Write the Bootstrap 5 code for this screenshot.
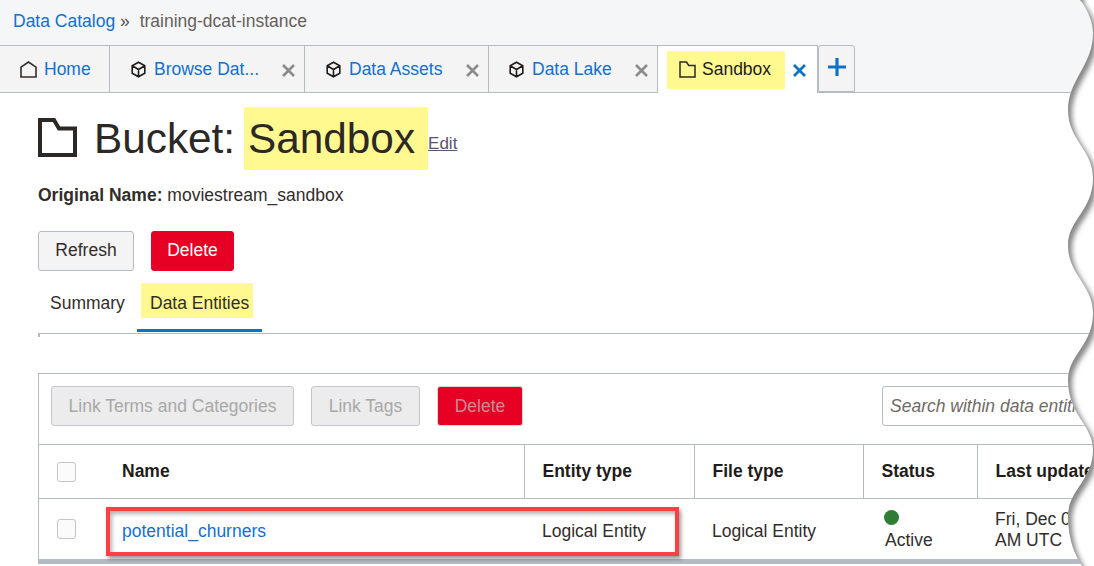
<!DOCTYPE html>
<html lang="en">
<head>
  <meta charset="UTF-8">
  <title>Bucket: Sandbox</title>
  <link href="https://cdn.jsdelivr.net/npm/bootstrap@5.3.0/dist/css/bootstrap.min.css" rel="stylesheet">
  <style>
    body {
      background: #fff;
      color: #312d2a;
      font-family: "Liberation Sans", Arial, sans-serif;
      font-size: 17.5px;
      line-height: 21px;
    }
    a { color: #1270d0; text-decoration: none; }
    .page-wrap { height: 566px; overflow: hidden; position: relative; }
    .hl { background: #fff98f; }

    .crumb-bar { height: 45px; background: #f5f6f8; padding: 11px 13px 0; }
    .crumb-sep { color: #555; margin: 0 3px 0 0; }
    .crumb-now { color: #665f5b; margin-left: 2px; }

    .tab-strip { height: 48px; background: #f5f6f8; border-bottom: 1px solid #b6bac3; align-items: stretch; flex-wrap: nowrap; }
    .tab-cell {
      height: 47px; background: #f4f4f5; border-top: 1px solid #b6bac3; border-right: 1px solid #b6bac3;
      display: flex; align-items: center; position: relative;
    }
    .tab-home { width: 110px; padding-left: 20px; }
    .tab-browse { width: 195px; padding-left: 20px; }
    .tab-assets { width: 184px; padding-left: 20px; }
    .tab-lake { width: 169px; padding-left: 19px; }
    .tab-active { width: 160px; height: 48px; background: #fff; padding-left: 9px; }
    .tab-add {
      width: 37px; height: 47px; background: #f4f4f5; padding-bottom: 3px;
      border: 1px solid #b6bac3; border-radius: 3px 3px 0 0;
      display: flex; align-items: center; justify-content: center;
    }
    .tab-cell .nav-link { color: #1270d0; padding: 1px 0 0; display: flex; align-items: center; gap: 7px; white-space: nowrap; }
    .tab-x { position: absolute; right: 9px; top: 18px; }
    .tab-active .tab-x { right: 11px; }
    .tab-hl { display: flex; align-items: center; gap: 6px; height: 38px; width: 118px; padding-left: 12px; color: #1b1b1b; }

    .main-area { padding: 14px 0 0 38px; }
    .title-line { display: flex; align-items: flex-end; height: 63px; }
    .title-icon { margin-bottom: 13px; margin-right: 17px; }
    .title-text { font-size: 42.3px; line-height: 63px; font-weight: 400; color: #2b2826; margin: 0; }
    .title-name { display: inline-block; width: 184px; padding-left: 4px; margin-left: 9px; }
    .edit-link { color: #5a5370; text-decoration: underline; margin-bottom: 16px; font-size: 17px; }
    .orig-line { margin-top: 15px; height: 21px; }

    .top-btns { margin-top: 25px; gap: 17px; }
    .ui-btn {
      height: 40px; font-size: 17.5px; line-height: 21px; padding: 0 0 2px; border-radius: 3px;
      background: #f4f4f5; border: 1px solid #b6bac3; color: #312d2a;
    }
    .ui-btn:disabled { background: #ececed; border-color: #c3c5cb; color: #a8a8a8; opacity: 1; padding: 0; }
    .ui-btn.btn-del { background: #e60023; border-color: #e60023; color: #fff; }
    .ui-btn.btn-del:disabled { background: #e60023; border-color: #d9d9d9; color: #c98b97; }
    .w-refresh { width: 96px; }
    .w-del { width: 83px; }
    .w-terms { width: 243px; }
    .w-tags { width: 109px; }
    .w-del2 { width: 86px; }

    .sub-tabs { height: 51px; margin-top: 12px; border-bottom: 1px solid #b6bac3; position: relative; flex-wrap: nowrap; }
    .sub-tabs::after { content: ""; position: absolute; left: 0; bottom: -4px; width: 2px; height: 3px; background: #b6bac3; }
    .sub-summary { padding: 0 12px; height: 36px; line-height: 41px; color: #312d2a; width: 99px; flex: none; }
    .sub-active { width: 125px; height: 49px; border-bottom: 3px solid #0572ce; padding: 0 9px 0 4px; }
    .sub-active span { display: block; height: 35px; line-height: 41px; padding-left: 9px; color: #312d2a; }

    .grid-box { margin-top: 39px; width: 1200px; border: 1px solid #b6bac3; border-bottom: 0; }
    .grid-tools { height: 70px; padding: 12px 12px 0; gap: 17px; }
    .grid-search {
      margin-left: 342px; width: 300px; height: 40px; border: 1px solid #b6bac3; border-radius: 3px;
      padding: 0 7px; font-size: 17.5px; font-family: inherit; font-style: italic;
    }
    .grid-search::placeholder { color: #6f6a67; opacity: 1; }

    .ent-table { table-layout: fixed; width: 1200px; margin: 0; border-top: 1px solid #b6bac3; color: #312d2a; }
    .ent-table th, .ent-table td { border: 0; padding: 0 18px; vertical-align: middle; background: transparent; color: #312d2a; }
    .ent-table thead th { height: 54px; font-weight: 700; border-left: 1px solid #b6bac3; border-bottom: 1px solid #b6bac3; color: #1f1c1a; }
    .ent-table thead th.no-line { border-left: 0; }
    .ent-table tbody td { height: 63px; padding-top: 2px; border-bottom: 5px solid #b6bac3; }
    .ent-table tbody td.cell-low { padding-top: 4px; }
    .ent-table .cell-name { padding-left: 16px; }
    .tick { display: block; width: 19px; height: 20px; margin-left: 18px; background: #fbfbfb; border: 1px solid #c3c5cb; border-radius: 3px; }
    .dot { display: block; width: 15px; height: 15px; border-radius: 50%; background: #2e7d32; margin-bottom: 5px; margin-left: 3px; }
    .status-txt { padding-left: 4px; display: block; }

    .red-mark {
      position: absolute; left: 106px; top: 507px; width: 573px; height: 49px;
      border: 4px solid #f94144; box-shadow: 2px 3px 4px rgba(0,0,0,.4), inset 2px 3px 4px rgba(0,0,0,.3);
    }
    .torn { position: absolute; left: 0; top: 0; width: 1094px; height: 566px; pointer-events: none; }
  </style>
</head>
<body>
<div class="page-wrap">

  <div class="crumb-bar">
    <a href="#">Data Catalog</a> <span class="crumb-sep">»</span> <span class="crumb-now">training-dcat-instance</span>
  </div>

  <ul class="nav tab-strip">
    <li class="tab-cell tab-home">
      <a class="nav-link" href="#">
        <svg width="17" height="17" viewBox="0 0 17 17" fill="none" stroke="#312d2a" stroke-width="1.6"><path d="M1 16V6.2L8.5 1 16 6.2V16z"/></svg>
        Home
      </a>
    </li>
    <li class="tab-cell tab-browse">
      <a class="nav-link" href="#">
        <svg width="17" height="17" viewBox="0 0 17 17" fill="none" stroke="#1f1c1a" stroke-width="1.6"><path d="M8.5 1.2l6.3 3.6v7.4l-6.3 3.6-6.3-3.6V4.8zM2.2 4.8l6.3 3.7 6.3-3.7M8.5 8.5v7.3"/></svg>
        Browse Dat...
      </a>
      <svg class="tab-x" width="13" height="13" viewBox="0 0 13 13" stroke="#8c8c8c" stroke-width="2.6"><path d="M1 1l11 11M12 1L1 12"/></svg>
    </li>
    <li class="tab-cell tab-assets">
      <a class="nav-link" href="#">
        <svg width="17" height="17" viewBox="0 0 17 17" fill="none" stroke="#1f1c1a" stroke-width="1.6"><path d="M8.5 1.2l6.3 3.6v7.4l-6.3 3.6-6.3-3.6V4.8zM2.2 4.8l6.3 3.7 6.3-3.7M8.5 8.5v7.3"/></svg>
        Data Assets
      </a>
      <svg class="tab-x" width="13" height="13" viewBox="0 0 13 13" stroke="#8c8c8c" stroke-width="2.6"><path d="M1 1l11 11M12 1L1 12"/></svg>
    </li>
    <li class="tab-cell tab-lake">
      <a class="nav-link" href="#">
        <svg width="17" height="17" viewBox="0 0 17 17" fill="none" stroke="#1f1c1a" stroke-width="1.6"><path d="M8.5 1.2l6.3 3.6v7.4l-6.3 3.6-6.3-3.6V4.8zM2.2 4.8l6.3 3.7 6.3-3.7M8.5 8.5v7.3"/></svg>
        Data Lake
      </a>
      <svg class="tab-x" width="13" height="13" viewBox="0 0 13 13" stroke="#8c8c8c" stroke-width="2.6"><path d="M1 1l11 11M12 1L1 12"/></svg>
    </li>
    <li class="tab-cell tab-active">
      <div class="tab-hl hl">
        <svg width="17" height="17" viewBox="0 0 17 17" fill="none" stroke="#2b2826" stroke-width="1.5"><path d="M1 16V1h6.5l2.2 3.4H16V16z"/></svg>
        Sandbox
      </div>
      <svg class="tab-x" width="13" height="13" viewBox="0 0 13 13" stroke="#0f72c8" stroke-width="2.8"><path d="M1 1l11 11M12 1L1 12"/></svg>
    </li>
    <li class="tab-add">
      <svg width="18" height="18" viewBox="0 0 18 18" stroke="#0f72c8" stroke-width="3.2"><path d="M9 0v18M0 9h18"/></svg>
    </li>
  </ul>

  <div class="main-area">
    <div class="title-line">
      <svg class="title-icon" width="39" height="39" viewBox="0 0 39 39" fill="none" stroke="#2b2826" stroke-width="4"><path d="M2 37V2h14l5 8.5h16V37z"/></svg>
      <h1 class="title-text">Bucket:<span class="title-name hl">Sandbox</span></h1>
      <a class="edit-link" href="#">Edit</a>
    </div>

    <div class="orig-line"><b>Original Name:</b> moviestream_sandbox</div>

    <div class="d-flex top-btns">
      <button class="btn ui-btn w-refresh">Refresh</button>
      <button class="btn ui-btn btn-del w-del">Delete</button>
    </div>

    <div class="d-flex sub-tabs">
      <div class="sub-summary">Summary</div>
      <div class="sub-active"><span class="hl">Data Entities</span></div>
    </div>

    <div class="grid-box">
      <div class="d-flex grid-tools">
        <button class="btn ui-btn w-terms" disabled>Link Terms and Categories</button>
        <button class="btn ui-btn w-tags" disabled>Link Tags</button>
        <button class="btn ui-btn btn-del w-del2" disabled>Delete</button>
        <input class="grid-search" type="text" placeholder="Search within data entities">
      </div>
      <table class="table ent-table">
        <colgroup>
          <col style="width:67px"><col style="width:418px"><col style="width:170px"><col style="width:169px"><col style="width:114px"><col>
        </colgroup>
        <thead>
          <tr>
            <th class="no-line p-0"><span class="tick"></span></th>
            <th class="no-line cell-name">Name</th>
            <th>Entity type</th>
            <th>File type</th>
            <th>Status</th>
            <th>Last updated</th>
          </tr>
        </thead>
        <tbody>
          <tr>
            <td class="p-0"><span class="tick"></span></td>
            <td class="cell-name cell-low"><a href="#">potential_churners</a></td>
            <td class="cell-low">Logical Entity</td>
            <td class="cell-low">Logical Entity</td>
            <td><span class="dot"></span><span class="status-txt">Active</span></td>
            <td>Fri, Dec 03, 2021<br>AM UTC</td>
          </tr>
        </tbody>
      </table>
    </div>
  </div>

  <div class="red-mark"></div>

  <svg class="torn" viewBox="0 0 1094 566">
    <defs>
      <clipPath id="outer"><path d="M1080 0C1087 8 1093 22 1093 33C1093 65 1068 80 1068 110C1068 140 1093 150 1093 178C1093 210 1068 220 1068 245C1068 275 1093 285 1093 313C1093 345 1068 355 1068 380C1068 415 1093 425 1093 450C1093 480 1068 490 1068 516C1068 540 1075 555 1082 566L1110 566L1110 0Z"/></clipPath>
      <filter id="soft" x="-5%" y="-5%" width="110%" height="110%"><feGaussianBlur stdDeviation="2.4"/></filter>
    </defs>
    <path fill="#fff" d="M1080 0C1087 8 1093 22 1093 33C1093 65 1068 80 1068 110C1068 140 1093 150 1093 178C1093 210 1068 220 1068 245C1068 275 1093 285 1093 313C1093 345 1068 355 1068 380C1068 415 1093 425 1093 450C1093 480 1068 490 1068 516C1068 540 1075 555 1082 566L1110 566L1110 0Z"/>
    <g clip-path="url(#outer)">
      <path fill="#888" filter="url(#soft)" transform="translate(4 4)" d="M1080 -10L1080 0C1087 8 1093 22 1093 33C1093 65 1068 80 1068 110C1068 140 1093 150 1093 178C1093 210 1068 220 1068 245C1068 275 1093 285 1093 313C1093 345 1068 355 1068 380C1068 415 1093 425 1093 450C1093 480 1068 490 1068 516C1068 540 1075 555 1082 566L1000 566L1000 -10Z"/>
    </g>
  </svg>
</div>
<script src="https://cdn.jsdelivr.net/npm/bootstrap@5.3.0/dist/js/bootstrap.bundle.min.js"></script>
</body>
</html>
